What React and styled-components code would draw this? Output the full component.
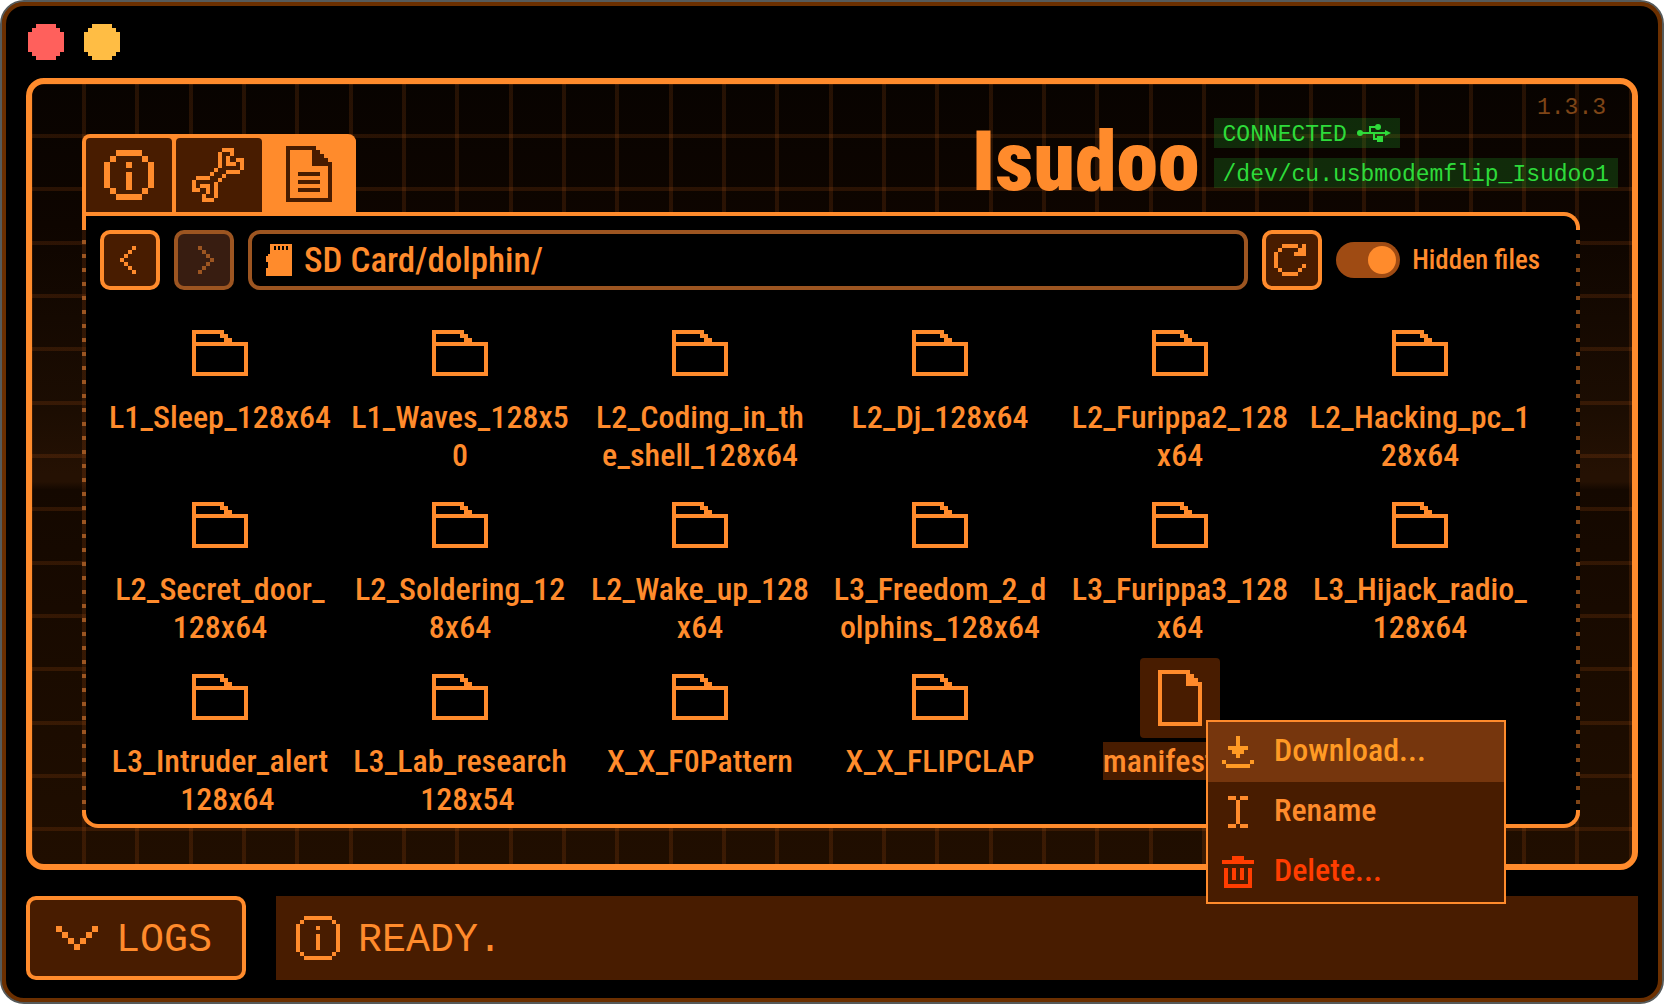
import React from "react";
import styled, { createGlobalStyle, css } from "styled-components";

const c = {
  orange: "#ff8b2c",
  amber: "#ff9a24",
  brown: "#481c00",
  dim: "#9c5521",
  faint: "#7f4517",
  green: "#2edb3a",
  red: "#ff3d00",
};
const condensed = `"Roboto Condensed", Roboto, "Liberation Sans", sans-serif`;
const mono = `"Liberation Mono", "DejaVu Sans Mono", monospace`;

const Global = createGlobalStyle`
  *, *::before, *::after { box-sizing: border-box; }
  body { margin: 0; background: #fff; }
  button, input { font: inherit; color: inherit; margin: 0; }
  ul { list-style: none; margin: 0; padding: 0; }
`;

/* Pixel-art icons: each is a list of [x, y, width, height] blocks. */
const icons = {
  light: { w: 36, h: 36, b: [[8, 0, 20, 4], [4, 4, 28, 4], [0, 8, 36, 20], [4, 28, 28, 4], [8, 32, 20, 4]] },
  info: {
    w: 50, h: 50,
    b: [[12, 0, 26, 6], [12, 44, 26, 6], [0, 12, 6, 26], [44, 12, 6, 26], [6, 6, 6, 6], [38, 6, 6, 6], [6, 38, 6, 6], [38, 38, 6, 6], [22, 12, 6, 6], [22, 22, 6, 18]],
  },
  infoThin: {
    w: 44, h: 44,
    b: [[8, 0, 28, 4], [8, 40, 28, 4], [0, 8, 4, 28], [40, 8, 4, 28], [4, 4, 4, 4], [36, 4, 4, 4], [4, 36, 4, 4], [36, 36, 4, 4], [20, 10, 4, 4], [20, 18, 4, 16]],
  },
  wrench: {
    w: 54, h: 54,
    b: [
      [30, 0, 12, 4], [38, 0, 4, 8], [34, 8, 4, 10], [34, 14, 10, 4], [44, 10, 8, 4], [48, 10, 4, 12], [34, 22, 14, 4],
      [30, 26, 4, 4], [26, 30, 4, 4], [22, 34, 4, 16], [10, 50, 12, 4], [10, 46, 4, 8], [14, 36, 4, 10], [8, 36, 10, 4],
      [0, 40, 8, 4], [0, 32, 4, 12], [4, 28, 14, 4], [18, 24, 4, 4], [22, 20, 4, 4], [26, 4, 4, 16],
    ],
  },
  doc: {
    w: 46, h: 58,
    b: [[0, 0, 30, 4], [0, 0, 4, 56], [0, 52, 46, 4], [42, 16, 4, 40], [26, 4, 8, 4], [26, 8, 12, 4], [26, 12, 16, 4], [26, 16, 20, 4], [12, 26, 22, 4], [12, 34, 22, 4], [12, 42, 22, 4]],
  },
  file: { w: 44, h: 56, b: [[0, 0, 32, 4], [0, 0, 4, 56], [0, 52, 44, 4], [40, 12, 4, 44], [28, 4, 8, 4], [28, 8, 12, 4], [28, 12, 16, 4]] },
  folder: { w: 56, h: 48, b: [[0, 0, 32, 4], [0, 0, 4, 46], [28, 4, 8, 4], [32, 8, 8, 4], [0, 12, 56, 4], [52, 12, 4, 34], [0, 42, 56, 4]] },
  back: { w: 20, h: 28, b: [[12, 0, 4, 4], [8, 4, 4, 4], [4, 8, 4, 4], [0, 12, 4, 4], [4, 16, 4, 4], [8, 20, 4, 4], [12, 24, 4, 4]] },
  forward: { w: 20, h: 28, b: [[4, 0, 4, 4], [8, 4, 4, 4], [12, 8, 4, 4], [16, 12, 4, 4], [12, 16, 4, 4], [8, 20, 4, 4], [4, 24, 4, 4]] },
  refresh: {
    w: 36, h: 32,
    b: [[8, 0, 16, 4], [28, 0, 4, 12], [4, 4, 4, 4], [24, 4, 4, 8], [20, 8, 4, 4], [0, 8, 4, 16], [28, 20, 4, 4], [4, 24, 4, 4], [24, 24, 4, 4], [8, 28, 16, 4]],
  },
  sd: {
    w: 26, h: 32,
    b: [[4, 0, 22, 2], [4, 2, 4, 4], [10, 2, 2, 4], [14, 2, 2, 4], [18, 2, 2, 4], [22, 2, 4, 4], [4, 6, 22, 4], [2, 10, 24, 2], [0, 12, 26, 6], [2, 18, 24, 6], [0, 24, 26, 8]],
  },
  chevron: { w: 42, h: 24, b: [[0, 0, 6, 6], [6, 6, 6, 6], [12, 12, 6, 6], [18, 18, 6, 6], [24, 12, 6, 6], [30, 6, 6, 6], [36, 0, 6, 6]] },
  download: { w: 32, h: 32, b: [[14, 0, 4, 22], [6, 10, 20, 4], [10, 14, 12, 4], [0, 24, 4, 4], [28, 24, 4, 4], [4, 28, 24, 4]] },
  rename: { w: 32, h: 32, b: [[6, 0, 8, 4], [18, 0, 8, 4], [14, 4, 4, 24], [6, 28, 8, 4], [18, 28, 8, 4]] },
  trash: { w: 32, h: 32, b: [[10, 0, 12, 4], [0, 4, 32, 4], [2, 12, 4, 20], [26, 12, 4, 20], [2, 28, 28, 4], [10, 12, 4, 12], [18, 12, 4, 12]] },
};

const Svg = styled.svg`
  display: block;
  flex: none;
  fill: currentColor;
`;

function Icon({ name }) {
  const { w, h, b } = icons[name];
  return (
    <Svg width={w} height={h} viewBox={`0 0 ${w} ${h}`} shapeRendering="crispEdges" aria-hidden="true">
      {b.map(([x, y, bw, bh], i) => (
        <rect key={i} x={x} y={y} width={bw} height={bh} />
      ))}
    </Svg>
  );
}

function UsbIcon() {
  return (
    <Svg width="34" height="18" viewBox="0 0 34 18" aria-hidden="true">
      <circle cx="3" cy="9" r="3" />
      <circle cx="21" cy="3" r="3" />
      <rect x="3" y="8" width="26" height="2" />
      <rect x="12" y="2" width="2" height="7" />
      <rect x="12" y="2" width="8" height="2" />
      <rect x="16" y="9" width="2" height="7" />
      <rect x="16" y="14" width="5" height="2" />
      <rect x="20" y="12" width="6" height="6" />
      <path d="M28 6 L34 9 L28 12 Z" />
    </Svg>
  );
}

const Frame = styled.div`
  position: relative;
  min-height: 100vh;
  display: flex;
  border: 2px solid #565a5a;
  border-radius: 24px;
  background: #6b2f00;
  color: ${c.orange};
  font-family: ${condensed};
  font-weight: 500;
`;
const Win = styled.div`
  flex: 1;
  min-width: 0;
  display: flex;
  flex-direction: column;
  padding: 18px 20px;
  border: 4px solid #6b2f00;
  border-radius: 22px;
  background: #000;
`;
const TitleBar = styled.header`
  display: flex;
  gap: 20px;
  padding: 0 2px 18px;
`;
const Light = styled.button`
  padding: 0;
  border: 0;
  background: none;
  color: ${(p) => p.$color};
`;

const line = "rgba(255, 120, 30, 0.12)";
const Screen = styled.main`
  flex: 1;
  display: flex;
  flex-direction: column;
  padding-bottom: 36px;
  border: 6px solid ${c.orange};
  border-radius: 18px;
  background:
    repeating-linear-gradient(to right, ${line} 0 4px, transparent 4px calc(160px / 3)) 50px 0 / 1600px 1600px padding-box,
    repeating-linear-gradient(to bottom, ${line} 0 4px, transparent 4px calc(160px / 3)) 0 50px / 1600px 1600px padding-box,
    linear-gradient(#080300 0%, #0e0500 18%, #1c0d02 42%, #251103 50%, #251103 51%, #140800 52%, #1a0b00 75%, #200e00 100%) padding-box;
`;
const Version = styled.div`
  height: 34px;
  padding: 14px 26px 0 0;
  text-align: right;
  font: 400 23px/20px ${mono};
  color: ${c.faint};
`;
const TopRow = styled.div`
  display: flex;
  justify-content: space-between;
  align-items: flex-end;
  height: 94px;
  padding: 0 14px 0 50px;
`;
const Tabs = styled.nav`
  display: flex;
  padding: 4px 0 0 4px;
  border-radius: 8px 8px 0 0;
  background: ${c.orange};
`;
const Tab = styled.button`
  display: flex;
  align-items: center;
  justify-content: center;
  width: ${(p) => (p.$active ? 94 : 86)}px;
  height: 74px;
  margin-right: ${(p) => (p.$first ? 4 : 0)}px;
  padding: 0;
  border: 0;
  border-radius: 4px 4px 0 0;
  background: ${(p) => (p.$active ? c.orange : c.brown)};
  color: ${(p) => (p.$active ? c.brown : c.orange)};
`;
const Brand = styled.div`
  display: flex;
  align-items: flex-end;
  gap: 14px;
  padding-bottom: 24px;
`;
const Name = styled.h1`
  margin: 0;
  font: 900 84px/52px ${condensed};
`;
const Badges = styled.div`
  display: flex;
  flex-direction: column;
  align-items: flex-start;
  gap: 10px;
`;
const Badge = styled.div`
  display: flex;
  align-items: center;
  gap: 10px;
  height: 30px;
  padding: 0 9px;
  background: rgba(46, 219, 58, 0.18);
  color: ${c.green};
  font: 400 23px/26px ${mono};
`;
const BadgeText = styled.span`
  padding-top: 4px;
`;

const dots = (color) => `repeating-linear-gradient(to bottom, ${color} 0 4px, transparent 4px 14px)`;
const cap = css`
  content: "";
  position: absolute;
  left: 0;
  right: 0;
  height: 18px;
  border: 4px solid ${c.orange};
  pointer-events: none;
`;
const Panel = styled.section`
  position: relative;
  flex: 1 0 612px;
  display: flex;
  flex-direction: column;
  margin: 0 52px 0 50px;
  padding: 18px 40px 4px 18px;
  border-radius: 0 16px 16px 16px;
  background:
    ${dots(c.dim)} left top / 4px 100% no-repeat,
    ${dots(c.faint)} right top / 4px 100% no-repeat,
    linear-gradient(#000, #000) 4px 0 no-repeat;
  &::before {
    ${cap}
    top: 0;
    border-bottom: 0;
    border-radius: 0 16px 0 0;
  }
  &::after {
    ${cap}
    bottom: 0;
    border-top: 0;
    border-radius: 0 0 16px 16px;
  }
`;
const Toolbar = styled.div`
  display: flex;
  align-items: center;
  gap: 14px;
`;
const Square = styled.button`
  flex: none;
  display: flex;
  align-items: center;
  justify-content: center;
  width: 60px;
  height: 60px;
  padding: 0;
  border: 4px solid ${c.orange};
  border-radius: 10px;
  background: ${c.brown};
  color: ${c.orange};
  &:disabled {
    border-color: ${c.dim};
    background: #381d11;
    color: ${c.dim};
  }
`;
const PathBox = styled.label`
  flex: 1;
  min-width: 0;
  display: flex;
  align-items: center;
  gap: 12px;
  height: 60px;
  padding: 0 14px;
  border: 4px solid ${c.dim};
  border-radius: 12px;
`;
const PathInput = styled.input`
  flex: 1;
  min-width: 0;
  height: 52px;
  padding: 0;
  border: 0;
  outline: 0;
  background: none;
  font-size: 35px;
`;
const Toggle = styled.label`
  display: flex;
  align-items: center;
  gap: 12px;
  font-size: 27px;
  white-space: nowrap;
`;
const Switch = styled.input`
  appearance: none;
  display: flex;
  align-items: center;
  width: 64px;
  height: 36px;
  padding: 0 4px;
  border-radius: 18px;
  background: #9f4b13;
  &::before {
    content: "";
    width: 28px;
    height: 28px;
    border-radius: 50%;
    background: ${c.orange};
  }
  &:checked {
    justify-content: flex-end;
  }
`;
const Files = styled.ul`
  flex: 1 1 0;
  min-height: 0;
  overflow: hidden;
  display: grid;
  grid-template-columns: repeat(6, minmax(0, 1fr));
  align-content: start;
  row-gap: 12px;
  padding-top: 24px;
`;
const Cell = styled.li`
  display: flex;
  flex-direction: column;
  align-items: center;
  gap: 4px;
  min-height: 160px;
`;
const Thumb = styled.div`
  display: flex;
  align-items: center;
  justify-content: center;
  width: 80px;
  height: 80px;
  border-radius: 4px;
  background: ${(p) => (p.$selected ? c.brown : "transparent")};
`;
const FileName = styled.div`
  font-size: 32px;
  line-height: 38px;
  text-align: center;
  white-space: nowrap;
  background: ${(p) => (p.$selected ? c.brown : "transparent")};
`;

const Footer = styled.footer`
  display: flex;
  gap: 30px;
  height: 84px;
  margin-top: 26px;
  flex: none;
  font: 400 40px/48px ${mono};
`;
const FooterText = styled.span`
  padding-top: 6px;
`;
const Logs = styled.button`
  display: flex;
  align-items: center;
  gap: 18px;
  padding: 0 30px 0 26px;
  border: 4px solid ${c.orange};
  border-radius: 10px;
  background: ${c.brown};
`;
const Status = styled.div`
  flex: 1;
  display: flex;
  align-items: center;
  gap: 18px;
  padding: 0 20px;
  background: ${c.brown};
`;

const Menu = styled.div`
  position: absolute;
  left: 1204px;
  top: 718px;
  width: 300px;
  border: 2px solid ${c.orange};
  background: ${c.brown};
`;
const MenuItem = styled.button`
  display: flex;
  align-items: center;
  gap: 20px;
  width: 100%;
  height: 60px;
  padding: 0 14px;
  border: 0;
  background: ${(p) => (p.$hover ? "#76360d" : "transparent")};
  color: ${(p) => p.$color};
  font-size: 32px;
  line-height: 38px;
  text-align: left;
`;
const MenuText = styled.span`
  padding-bottom: 4px;
`;

const files = [
  ["L1_Sleep_128x64"], ["L1_Waves_128x5", "0"], ["L2_Coding_in_th", "e_shell_128x64"], ["L2_Dj_128x64"],
  ["L2_Furippa2_128", "x64"], ["L2_Hacking_pc_1", "28x64"], ["L2_Secret_door_", "128x64"], ["L2_Soldering_12", "8x64"],
  ["L2_Wake_up_128", "x64"], ["L3_Freedom_2_d", "olphins_128x64"], ["L3_Furippa3_128", "x64"], ["L3_Hijack_radio_", "128x64"],
  ["L3_Intruder_alert", "\u00a0\u00a0128x64"], ["L3_Lab_research", "\u00a0\u00a0128x54"], ["X_X_F0Pattern"], ["X_X_FLIPCLAP"],
];

export default function App() {
  return (
    <>
      <Global />
      <Frame>
        <Win>
          <TitleBar>
            <Light $color="#ff605c" aria-label="Close"><Icon name="light" /></Light>
            <Light $color="#ffbd44" aria-label="Minimize"><Icon name="light" /></Light>
          </TitleBar>
          <Screen>
            <Version>1.3.3</Version>
            <TopRow>
              <Tabs>
                <Tab $first aria-label="Device info"><Icon name="info" /></Tab>
                <Tab aria-label="Tools"><Icon name="wrench" /></Tab>
                <Tab $active aria-label="Files"><Icon name="doc" /></Tab>
              </Tabs>
              <Brand>
                <Name>Isudoo</Name>
                <Badges>
                  <Badge><BadgeText>CONNECTED</BadgeText><UsbIcon /></Badge>
                  <Badge><BadgeText>/dev/cu.usbmodemflip_Isudoo1</BadgeText></Badge>
                </Badges>
              </Brand>
            </TopRow>
            <Panel>
              <Toolbar>
                <Square aria-label="Back"><Icon name="back" /></Square>
                <Square disabled aria-label="Forward"><Icon name="forward" /></Square>
                <PathBox>
                  <Icon name="sd" />
                  <PathInput aria-label="Path" defaultValue="SD Card/dolphin/" />
                </PathBox>
                <Square aria-label="Refresh"><Icon name="refresh" /></Square>
                <Toggle>
                  <Switch type="checkbox" defaultChecked />
                  Hidden files
                </Toggle>
              </Toolbar>
              <Files>
                {files.map((lines) => (
                  <Cell key={lines[0]}>
                    <Thumb><Icon name="folder" /></Thumb>
                    <FileName>
                      {lines[0]}
                      {lines[1] && <br />}
                      {lines[1]}
                    </FileName>
                  </Cell>
                ))}
                <Cell>
                  <Thumb $selected><Icon name="file" /></Thumb>
                  <FileName $selected>manifest.txt</FileName>
                </Cell>
              </Files>
            </Panel>
          </Screen>
          <Footer>
            <Logs><Icon name="chevron" /><FooterText>LOGS</FooterText></Logs>
            <Status><Icon name="infoThin" /><FooterText>READY.</FooterText></Status>
          </Footer>
        </Win>
        <Menu>
          <MenuItem $hover $color={c.amber}><Icon name="download" /><MenuText>Download...</MenuText></MenuItem>
          <MenuItem $color={c.orange}><Icon name="rename" /><MenuText>Rename</MenuText></MenuItem>
          <MenuItem $color={c.red}><Icon name="trash" /><MenuText>Delete...</MenuText></MenuItem>
        </Menu>
      </Frame>
    </>
  );
}
